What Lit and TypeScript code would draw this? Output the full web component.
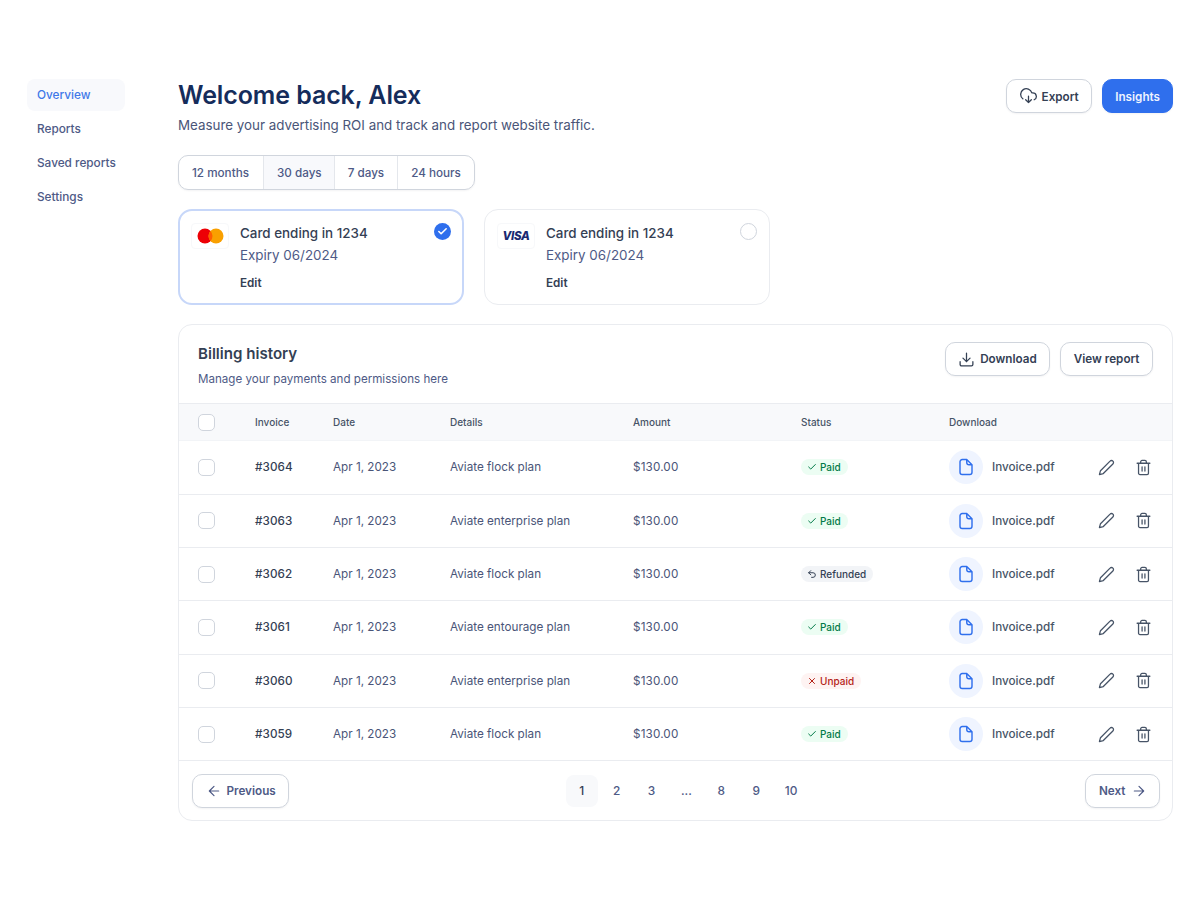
import { LitElement, html, css, svg, TemplateResult } from "lit";
import { customElement } from "lit/decorators.js";

type Status = "paid" | "refunded" | "unpaid";

const rows: { id: string; plan: string; status: Status }[] = [
  { id: "#3064", plan: "Aviate flock plan", status: "paid" },
  { id: "#3063", plan: "Aviate enterprise plan", status: "paid" },
  { id: "#3062", plan: "Aviate flock plan", status: "refunded" },
  { id: "#3061", plan: "Aviate entourage plan", status: "paid" },
  { id: "#3060", plan: "Aviate enterprise plan", status: "unpaid" },
  { id: "#3059", plan: "Aviate flock plan", status: "paid" },
];

const icon = (size: number, body: TemplateResult, width = 1.8) => html`
  <svg
    width=${size}
    height=${size}
    viewBox="0 0 24 24"
    fill="none"
    stroke="currentColor"
    stroke-width=${width}
    stroke-linecap="round"
    stroke-linejoin="round"
  >
    ${body}
  </svg>
`;

const cloudIcon = svg`<path d="M8 16.5l4 4 4-4M12 11.5v9M20 16.6A5 5 0 0 0 18 7h-1.3A8 8 0 1 0 4 15.3" />`;
const downloadIcon = svg`<path d="M21 15v4a2 2 0 0 1-2 2H5a2 2 0 0 1-2-2v-4M7 10l5 5 5-5M12 15V3" />`;
const arrowLeft = svg`<path d="M19 12H5M12 19l-7-7 7-7" />`;
const arrowRight = svg`<path d="M5 12h14M12 5l7 7-7 7" />`;
const fileIcon = svg`<path d="M13 2H7a3 3 0 0 0-3 3v14a3 3 0 0 0 3 3h10a3 3 0 0 0 3-3V9zM13 2v4a3 3 0 0 0 3 3h4" />`;
const pencilIcon = svg`<path d="M17 3a2.83 2.83 0 1 1 4 4L7.5 20.5 2 22l1.5-5.5z" />`;
const trashIcon = svg`<path d="M3 6h18M8 6V4a2 2 0 0 1 2-2h4a2 2 0 0 1 2 2v2M19 6v14a2 2 0 0 1-2 2H7a2 2 0 0 1-2-2V6M10 11v6M14 11v6" />`;
const checkIcon = svg`<path d="M20 6L9 17l-5-5" />`;
const crossIcon = svg`<path d="M18 6L6 18M6 6l12 12" />`;
const undoIcon = svg`<path d="M9 14L4 9l5-5M4 9h10.5a5.5 5.5 0 0 1 0 11H11" />`;

@customElement("app-root")
export class AppRoot extends LitElement {
  static styles = css`
    :host {
      display: block;
      min-height: 900px;
      background: #fff;
      font-family: Inter, "Liberation Sans", sans-serif;
      color: #4a5578;
    }
    svg {
      display: block;
      flex: none;
    }
    .page {
      display: flex;
      align-items: flex-start;
      padding: 79px 27px 0;
    }
    .side {
      width: 98px;
      margin-right: 53px;
      flex: none;
      display: flex;
      flex-direction: column;
      gap: 2.2px;
    }
    .side a {
      height: 32px;
      box-sizing: border-box;
      padding: 0 0 1px 10px;
      border-radius: 8px;
      display: flex;
      align-items: center;
      font-size: 11.8px;
      font-weight: 500;
      color: #4e5a86;
    }
    .side a.active {
      background: #f8f9fc;
      color: #3f78e8;
    }
    .main {
      flex: 1;
      min-width: 0;
    }
    .top {
      display: flex;
      justify-content: space-between;
      align-items: flex-start;
    }
    h1 {
      margin: 0;
      font-size: 25px;
      line-height: 32px;
      font-weight: 600;
      color: #152c5b;
      letter-spacing: -0.1px;
    }
    .sub {
      margin-top: 4px;
      font-size: 13.37px;
      line-height: 20px;
      color: #4a5578;
    }
    .actions {
      display: flex;
      gap: 10px;
    }
    .btn {
      height: 34px;
      box-sizing: border-box;
      padding: 0 12.5px;
      display: flex;
      align-items: center;
      gap: 5px;
      border: 1px solid #d0d5dd;
      border-radius: 10px;
      background: #fff;
      font-size: 11.7px;
      font-weight: 600;
      color: #344054;
      box-shadow: 0 1px 2px rgba(16, 24, 40, 0.05);
    }
    .top .btn,
    .btn.pager {
      padding-top: 1px;
    }
    .btn.primary {
      padding-left: 12px;
      padding-right: 12px;
      background: #2f6fed;
      border-color: #2f6fed;
      color: #eef3ff;
    }
    .btn.pager {
      color: #4e5a86;
    }
    .tabs {
      margin-top: 20px;
      display: inline-flex;
      height: 35px;
      box-sizing: border-box;
      border: 1px solid #d0d5dd;
      border-radius: 10px;
      overflow: hidden;
      box-shadow: 0 1px 2px rgba(16, 24, 40, 0.05);
    }
    .tabs span {
      display: flex;
      align-items: center;
      padding: 0 13px;
      font-size: 11.7px;
      font-weight: 500;
      color: #4e5a86;
      border-left: 1px solid #e4e7ec;
    }
    .tabs span:first-child {
      padding-right: 14px;
      border-left: none;
    }
    .tabs span.on {
      padding-right: 12px;
      background: #f8f9fc;
    }
    .cards {
      margin-top: 19px;
      display: flex;
      gap: 20px;
    }
    .pay {
      position: relative;
      width: 286px;
      height: 96px;
      box-sizing: border-box;
      padding: 13px 13px 0 12px;
      display: flex;
      gap: 11px;
      border: 1px solid #eaecf0;
      border-radius: 14px;
    }
    .pay.on {
      border: 2px solid #c7d7f9;
      padding: 12px 12px 0 11px;
    }
    .logo {
      width: 38px;
      height: 26px;
      flex: none;
      box-sizing: border-box;
      border: 1px solid #f7f8fa;
      border-radius: 4px;
      display: flex;
      align-items: center;
      justify-content: center;
    }
    .visa {
      font-size: 11.5px;
      font-weight: 800;
      font-style: italic;
      color: #1a2a72;
      letter-spacing: -0.3px;
    }
    .pay .title {
      font-size: 13.4px;
      line-height: 20px;
      font-weight: 500;
      color: #344054;
    }
    .pay .exp {
      margin-top: 2px;
      font-size: 13.4px;
      line-height: 20px;
      color: #4e5a86;
    }
    .pay .edit {
      margin-top: 10px;
      font-size: 11.7px;
      line-height: 16px;
      font-weight: 600;
      color: #344054;
    }
    .radio {
      position: absolute;
      top: 13px;
      right: 12px;
      width: 17px;
      height: 17px;
      box-sizing: border-box;
      border: 1px solid #d0d5dd;
      border-radius: 50%;
    }
    .pay.on .radio {
      top: 12px;
      right: 11px;
      border: none;
      background: #2f6fed;
      color: #fff;
      display: flex;
      align-items: center;
      justify-content: center;
    }
    .table {
      margin-top: 19px;
      border: 1px solid #eaecf0;
      border-radius: 14px;
      overflow: hidden;
    }
    .thead {
      height: 78px;
      box-sizing: border-box;
      padding: 17px 19px 0;
      display: flex;
      justify-content: space-between;
      align-items: flex-start;
    }
    .thead h2 {
      margin: 0;
      font-size: 15.1px;
      line-height: 24px;
      font-weight: 600;
      color: #344054;
    }
    .thead p {
      margin: 3px 0 0;
      font-size: 11.6px;
      line-height: 20px;
      color: #4e5a86;
    }
    .row {
      display: grid;
      grid-template-columns: 57px 78px 117px 183px 168px 148px 149px 1fr;
      align-items: center;
      padding-left: 19px;
      box-sizing: border-box;
      height: 53.33px;
      border-top: 1px solid #eaecf0;
      font-size: 11.7px;
      color: #4a5578;
    }
    .row.head {
      height: 37.3px;
      background: #f8f9fb;
      font-size: 10px;
      font-weight: 500;
      color: #475467;
    }
    .row.first {
      border-top-color: #f2f4f7;
    }
    .row .inv {
      font-weight: 500;
      letter-spacing: 0.05px;
      color: #344054;
    }
    .row .amount {
      letter-spacing: 0.15px;
    }
    .check {
      width: 17px;
      height: 17px;
      box-sizing: border-box;
      border: 1px solid #d0d5dd;
      border-radius: 5px;
      background: #fff;
    }
    .badge {
      display: inline-flex;
      align-items: center;
      gap: 3px;
      height: 16px;
      padding: 0 7px 0 6px;
      border-radius: 8px;
      font-size: 10px;
      font-weight: 500;
    }
    .badge.paid {
      background: #ecfdf3;
      color: #027a48;
    }
    .badge.refunded {
      background: #f2f4f7;
      color: #344054;
    }
    .badge.unpaid {
      background: #fef3f2;
      color: #b42318;
    }
    .file {
      display: flex;
      align-items: center;
      gap: 9px;
      font-weight: 500;
      color: #475467;
    }
    .file i {
      width: 34px;
      height: 34px;
      border-radius: 50%;
      background: #eff4ff;
      color: #2f6fed;
      display: flex;
      align-items: center;
      justify-content: center;
    }
    .tools {
      display: flex;
      gap: 20px;
      color: #475467;
    }
    .foot {
      height: 60px;
      box-sizing: border-box;
      padding: 0 12px 0 13px;
      border-top: 1px solid #eaecf0;
      display: flex;
      align-items: center;
      justify-content: space-between;
    }
    .pages {
      display: flex;
      gap: 2.9px;
      margin-right: 2px;
    }
    .pages span {
      width: 32px;
      height: 32px;
      border-radius: 8px;
      display: flex;
      align-items: center;
      justify-content: center;
      font-size: 11.9px;
      font-weight: 500;
      color: #4e5a86;
    }
    .pages span.on {
      background: #f8f9fb;
      color: #344054;
    }
  `;

  private _badge(status: Status): TemplateResult {
    const label = { paid: "Paid", refunded: "Refunded", unpaid: "Unpaid" }[status];
    const glyph = { paid: checkIcon, refunded: undoIcon, unpaid: crossIcon }[status];
    return html`<span class="badge ${status}">${icon(10, glyph, 2.4)}${label}</span>`;
  }

  private _row(row: (typeof rows)[number], index: number): TemplateResult {
    return html`
      <div class="row ${index === 0 ? "first" : ""}">
        <div class="check"></div>
        <div class="inv">${row.id}</div>
        <div>Apr 1, 2023</div>
        <div>${row.plan}</div>
        <div class="amount">$130.00</div>
        <div>${this._badge(row.status)}</div>
        <div class="file"><i>${icon(18, fileIcon, 1.9)}</i>Invoice.pdf</div>
        <div class="tools">${icon(17, pencilIcon)}${icon(17, trashIcon)}</div>
      </div>
    `;
  }

  private _card(selected: boolean, logo: TemplateResult): TemplateResult {
    return html`
      <div class="pay ${selected ? "on" : ""}">
        <div class="logo">${logo}</div>
        <div>
          <div class="title">Card ending in 1234</div>
          <div class="exp">Expiry 06/2024</div>
          <div class="edit">Edit</div>
        </div>
        <div class="radio">${selected ? icon(11, checkIcon, 3.4) : ""}</div>
      </div>
    `;
  }

  protected render(): TemplateResult {
    const mastercard = html`
      <svg width="27" height="16" viewBox="0 0 27 16">
        <circle cx="8" cy="8" r="7.5" fill="#ed0006" />
        <circle cx="19" cy="8" r="7.5" fill="#f9a000" />
        <path d="M13.5 2.9a7.5 7.5 0 0 1 0 10.2 7.5 7.5 0 0 1 0-10.2z" fill="#ff5e00" />
      </svg>
    `;
    return html`
      <div class="page">
        <nav class="side">
          <a class="active">Overview</a>
          <a>Reports</a>
          <a>Saved reports</a>
          <a>Settings</a>
        </nav>
        <main class="main">
          <div class="top">
            <div>
              <h1>Welcome back, Alex</h1>
              <div class="sub">Measure your advertising ROI and track and report website traffic.</div>
            </div>
            <div class="actions">
              <div class="btn">${icon(17, cloudIcon)}Export</div>
              <div class="btn primary">Insights</div>
            </div>
          </div>
          <div class="tabs">
            <span>12 months</span>
            <span class="on">30 days</span>
            <span>7 days</span>
            <span>24 hours</span>
          </div>
          <div class="cards">
            ${this._card(true, mastercard)}
            ${this._card(false, html`<span class="visa">VISA</span>`)}
          </div>
          <section class="table">
            <div class="thead">
              <div>
                <h2>Billing history</h2>
                <p>Manage your payments and permissions here</p>
              </div>
              <div class="actions">
                <div class="btn">${icon(17, downloadIcon)}Download</div>
                <div class="btn">View report</div>
              </div>
            </div>
            <div class="row head">
              <div class="check"></div>
              <div>Invoice</div>
              <div>Date</div>
              <div>Details</div>
              <div>Amount</div>
              <div>Status</div>
              <div>Download</div>
              <div></div>
            </div>
            ${rows.map((row, i) => this._row(row, i))}
            <div class="foot">
              <div class="btn pager">${icon(16, arrowLeft)}Previous</div>
              <div class="pages">
                <span class="on">1</span>
                <span>2</span>
                <span>3</span>
                <span>...</span>
                <span>8</span>
                <span>9</span>
                <span>10</span>
              </div>
              <div class="btn pager">Next${icon(16, arrowRight)}</div>
            </div>
          </section>
        </main>
      </div>
    `;
  }
}
